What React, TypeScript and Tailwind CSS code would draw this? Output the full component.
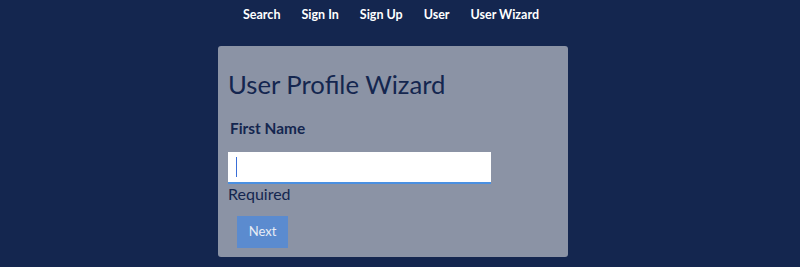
export default function App() {
  return (
    <div className="min-h-screen h-[267px] bg-[#14264f] font-['Lato','Noto_Sans',sans-serif] overflow-hidden">
      <nav className="flex justify-center gap-[21px] pt-[6px] pr-[18px] text-[12.5px] font-bold text-white h-[46px]">
        <a className="leading-[18px]">Search</a>
        <a className="leading-[18px]">Sign In</a>
        <a className="leading-[18px]">Sign Up</a>
        <a className="leading-[18px]">User</a>
        <a className="leading-[18px]">User Wizard</a>
      </nav>
      <div className="ml-[218px] w-[350px] h-[211px] bg-[#8b93a5] rounded-[3px] px-[10px] pt-[22px] text-[#14264f]">
        <h1 className="text-[25.7px] leading-[32px] font-normal">User Profile Wizard</h1>
        <label className="block mt-[18px] ml-[2px] text-[15.4px] font-bold leading-[20px]">First Name</label>
        <div className="mt-[14px] w-[263px] h-[32px] bg-white border-b-2 border-[#4a90e2] flex items-center pl-[8px]">
          <span className="w-px h-[20px] bg-[#3a6fd8]" />
        </div>
        <p className="text-[16px] leading-[20px]">Required</p>
        <button className="mt-[12px] ml-[9px] w-[51px] h-[32px] bg-[#5b8bcf] text-[#e8edf5] text-[13px]">
          Next
        </button>
      </div>
    </div>
  );
}
